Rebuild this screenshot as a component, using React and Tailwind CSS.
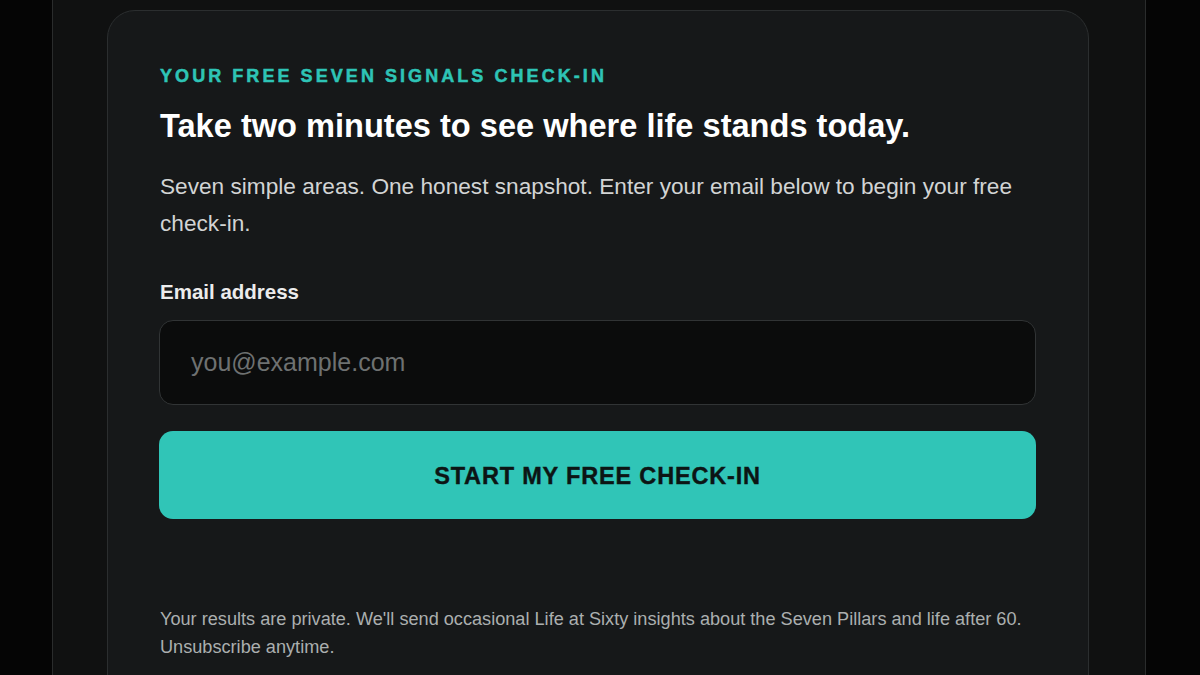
export default function App() {
  return (
    <div
      className="w-[1200px] h-[675px] overflow-hidden bg-[#050505] flex"
      style={{ fontFamily: '"Liberation Sans", Arial, sans-serif' }}
    >
      <div className="ml-[52px] w-[1094px] h-full shrink-0 bg-[#101111] border-x border-[#2a2c2c] pt-[10px]">
        <div className="ml-[54px] w-[982px] h-[720px] bg-[#161819] border border-[#2b2e2f] rounded-[28px] px-[52px] pt-[52px]">
          <div className="text-[18px] font-bold tracking-[0.17em] text-[#2ec4b6] leading-[27px] [-webkit-text-stroke:0.5px_#2ec4b6]">
            YOUR FREE SEVEN SIGNALS CHECK-IN
          </div>
          <h1 className="mt-[16px] text-[32.6px] font-bold text-white leading-[40px]">
            Take two minutes to see where life stands today.
          </h1>
          <p className="mt-[22px] text-[22.65px] leading-[37px] text-[#d2d4d4]">
            Seven simple areas. One honest snapshot. Enter your email below to begin your free check-in.
          </p>
          <label className="block mt-[36px] text-[20.5px] font-bold text-[#ececec] leading-[28px]">
            Email address
          </label>
          <div className="mt-[14px] -ml-px h-[85px] rounded-[14px] bg-[#0b0c0c] border border-[#313435] flex items-center px-[31px]">
            <span className="text-[25px] text-[#6e7171]">you@example.com</span>
          </div>
          <div className="mt-[26px] -ml-px h-[88px] rounded-[14px] bg-[#30c5b7] flex items-center justify-center pt-[3px]">
            <span className="text-[23.5px] font-bold tracking-[0.035em] text-[#0c1514] [-webkit-text-stroke:0.4px_#0c1514]">START MY FREE CHECK-IN</span>
          </div>
          <p className="mt-[86px] text-[18.15px] leading-[28px] text-[#abafaf]">
            Your results are private. We'll send occasional Life at Sixty insights about the Seven Pillars and life after 60. Unsubscribe anytime.
          </p>
        </div>
      </div>
    </div>
  );
}
